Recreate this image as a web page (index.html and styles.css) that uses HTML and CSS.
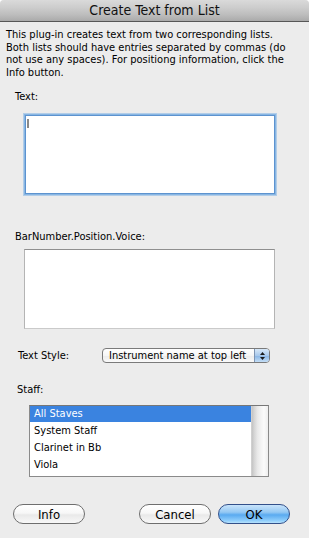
FILE: index.html
```html
<!DOCTYPE html>
<html>
<head>
<meta charset="utf-8">
<link rel="stylesheet" href="styles.css">
</head>
<body>
<div class="window">
  <div class="titlebar">Create Text from List</div>
  <div class="content">
    <p class="desc">This plug-in creates text from two corresponding lists.<br>Both lists should have entries separated by commas (do<br>not use any spaces). For positiong information, click the<br>Info button.</p>
    <div class="label label-text">Text:</div>
    <div class="field field-focus"><span class="caret"></span></div>
    <div class="label label-bar">BarNumber.Position.Voice:</div>
    <div class="field field-plain"></div>
    <div class="style-row">
      <span class="style-label">Text Style:</span>
      <div class="popup">
        <span class="popup-text">Instrument name at top left</span>
        <span class="stepper">
          <svg width="7" height="10" viewBox="0 0 7 10"><path d="M3.5 1 L6 4 L1 4 Z" fill="#1a1a1a"/><path d="M1 6 L6 6 L3.5 9 Z" fill="#1a1a1a"/></svg>
        </span>
      </div>
    </div>
    <div class="label label-staff">Staff:</div>
    <div class="list">
      <div class="rows">
        <div class="row selected">All Staves</div>
        <div class="row">System Staff</div>
        <div class="row">Clarinet in Bb</div>
        <div class="row">Viola</div>
      </div>
      <div class="scrollbar"></div>
    </div>
    <div class="buttons">
      <button class="btn">Info</button>
      <span class="spacer"></span>
      <button class="btn">Cancel</button>
      <button class="btn btn-default">OK</button>
    </div>
  </div>
</div>
</body>
</html>
```

FILE: styles.css
```css
html, body {
  margin: 0;
  padding: 0;
  background: #ffffff;
}
body {
  width: 309px;
  height: 538px;
  overflow: hidden;
  font-family: "DejaVu Sans Condensed", "DejaVu Sans", sans-serif;
  font-stretch: condensed;
  color: #000;
}
.window {
  width: 309px;
  height: 538px;
  background: #ececec;
  border-radius: 4px 4px 0 0;
  overflow: hidden;
  display: flex;
  flex-direction: column;
}
.titlebar {
  height: 21px;
  border-bottom: 1px solid #575757;
  background: linear-gradient(#dadada 0%, #cdcdcd 35%, #bdbdbd 70%, #aaaaaa 100%);
  text-align: center;
  font-size: 14px;
  line-height: 21px;
  color: #111;
  box-sizing: content-box;
}
.content {
  display: flex;
  flex-direction: column;
}
.desc {
  margin: 7px 0 0 6px;
  font-size: 11px;
  line-height: 12.6px;
  white-space: nowrap;
}
.label {
  font-size: 11px;
  line-height: 13px;
  margin-left: 15px;
}
.label-text { margin-top: 11px; }
.field {
  background: #fff;
  box-sizing: border-box;
}
.field-focus {
  margin: 12px 0 0 25px;
  width: 250px;
  height: 79px;
  border: 1px solid #5d93cf;
  box-shadow: 0 0 0 1px #88b6e3, 0 0 0 2px rgba(140, 185, 230, 0.6);
  position: relative;
}
.caret {
  position: absolute;
  left: 1px;
  top: 3px;
  width: 2px;
  height: 9px;
  background: #8a8a8a;
}
.label-bar { margin-top: 36px; }
.field-plain {
  margin: 6px 0 0 24px;
  width: 251px;
  height: 80px;
  border: 1px solid #b4b4b4;
  border-top-color: #8f8f8f;
  border-bottom-color: #cacaca;
}
.style-row {
  margin-top: 19px;
  height: 15px;
  display: flex;
  align-items: center;
}
.style-label {
  font-size: 11px;
  margin-left: 18px;
  width: 84px;
}
.popup {
  width: 168px;
  height: 15px;
  box-sizing: border-box;
  border: 1px solid #7a7a7a;
  border-radius: 4px;
  background: linear-gradient(#ffffff, #f6f6f6 50%, #ebebeb 51%, #fafafa);
  display: flex;
  align-items: center;
  overflow: hidden;
}
.popup-text {
  flex: 1;
  font-size: 11px;
  padding-left: 6px;
  line-height: 13px;
}
.stepper {
  width: 14px;
  height: 13px;
  border-left: 1px solid #7d94b3;
  background: linear-gradient(#d8e8f8, #a8c9ec 50%, #86b3e4 51%, #c4def6);
  display: flex;
  align-items: center;
  justify-content: center;
}
.stepper svg { display: block; }
.label-staff {
  margin-top: 20px;
  margin-left: 17px;
}
.list {
  margin: 9px 0 0 29px;
  width: 240px;
  height: 72px;
  box-sizing: border-box;
  border: 1px solid #8a8a8a;
  border-top-color: #777;
  background: #fff;
  display: flex;
}
.rows {
  flex: 1;
}
.row {
  height: 17px;
  line-height: 16px;
  font-size: 11px;
  padding-left: 4px;
}
.row.selected {
  background: #3a83e0;
  color: #fff;
  height: 16px;
  margin-bottom: 1px;
}
.scrollbar {
  width: 16px;
  background: linear-gradient(to right, #c4c4c4 0%, #d6d6d6 15%, #e9e9e9 35%, #f3f3f3 55%, #fbfbfb 75%, #eeeeee 100%);
  border-left: 1px solid #d0d0d0;
}
.buttons {
  margin-top: 27px;
  display: flex;
  padding: 0 19px 0 13px;
}
.spacer { flex: 1; }
.btn {
  width: 72px;
  height: 20px;
  box-sizing: border-box;
  border: 1px solid #6e6e6e;
  border-radius: 10px;
  background: linear-gradient(#ffffff 0%, #f7f7f7 45%, #e9e9e9 55%, #f8f8f8 100%);
  font-family: "DejaVu Sans Condensed", "DejaVu Sans", sans-serif;
  font-stretch: condensed;
  font-size: 13px;
  line-height: 17px;
  padding: 0;
  color: #000;
  margin-left: 7px;
}
.btn:first-child { margin-left: 0; }
.btn-default {
  border-color: #33508a;
  background: linear-gradient(#c9e4fb 0%, #94c8f3 40%, #5aaaf0 55%, #8cccfb 85%, #b6e2fd 100%);
}
```
